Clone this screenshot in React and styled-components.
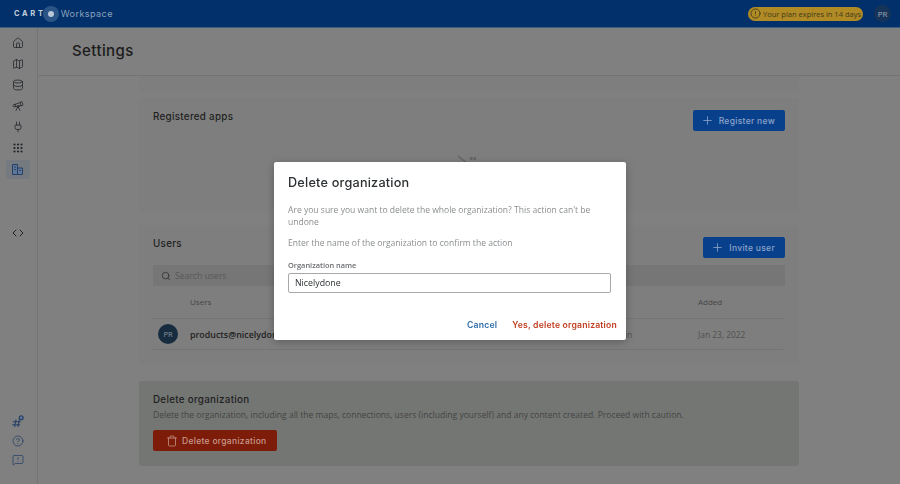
import styled, { createGlobalStyle } from 'styled-components'
import {
  Home, Map, Database, Telescope, Plug, Grip, Code, CircleHelp,
  MessageSquareWarning, Plus, Search, Trash, CircleAlert,
} from 'lucide-react'

const GlobalStyle = createGlobalStyle`
  html, body { margin: 0; padding: 0; height: 100%; overflow: hidden; background: #808080; }
  * { box-sizing: border-box; }
  body { font-family: "Open Sans", "Liberation Sans", sans-serif; }
`

const heading = `"Inter", "DejaVu Sans", sans-serif`

const Page = styled.div`
  width: 900px;
  height: 484px;
  display: flex;
  flex-direction: column;
  overflow: hidden;
`
const TopBar = styled.header`
  height: 28px;
  flex: none;
  background: #01306b;
  display: flex;
  align-items: center;
  padding: 0 9px 0 14px;
  border-bottom: 1px solid #3d5f86;
`
const Logo = styled.div`
  display: flex;
  align-items: center;
  font-family: ${heading};
  font-size: 7.5px;
  font-weight: 700;
  letter-spacing: 2.7px;
  color: #c4cfdc;
`
const LogoDot = styled.span`
  width: 16px;
  height: 16px;
  margin-left: -3px;
  border-radius: 50%;
  background: #2b5587;
  display: flex;
  align-items: center;
  justify-content: center;
  &::after {
    content: '';
    width: 6px;
    height: 6px;
    border-radius: 50%;
    background: #b8c8d8;
  }
`
const Product = styled.span`
  margin-left: 2px;
  font-family: ${heading};
  font-size: 9.1px;
  letter-spacing: 0.4px;
  color: #8ba1bb;
`
const PlanPill = styled.div`
  margin-left: auto;
  height: 14px;
  width: 115px;
  border-radius: 7px;
  background: #b08a25;
  color: #3f3a1c;
  font-size: 7.5px;
  display: flex;
  align-items: center;
  gap: 2px;
  padding-left: 2px;
  white-space: nowrap;
`
const TopAvatar = styled.div`
  width: 17px;
  height: 17px;
  margin-left: 11px;
  border-radius: 50%;
  background: #16345a;
  color: #a0aab8;
  font-size: 8px;
  display: flex;
  align-items: center;
  justify-content: center;
`
const Body = styled.div`
  flex: 1;
  display: flex;
  min-height: 0;
`
const Sidebar = styled.nav`
  width: 38px;
  flex: none;
  border-right: 1px solid #747474;
  display: flex;
  flex-direction: column;
  align-items: center;
  padding: 5px 2px 15px 0;
`
const NavItem = styled.div`
  width: 24px;
  height: 19px;
  margin-bottom: ${p => (p.$tight ? '0' : '2.2px')};
  display: flex;
  align-items: center;
  justify-content: center;
  border-radius: 2px;
  color: ${p => (p.$tone === 'blue' ? '#263f66' : '#1f2226')};
  background: ${p => (p.$active ? '#757a80' : 'transparent')};
`
const NavDivider = styled.div`
  height: 42px;
`
const NavFooter = styled.div`
  margin-top: auto;
`
const Main = styled.main`
  flex: 1;
  min-width: 0;
`
const PageHead = styled.div`
  height: 48px;
  padding: 13px 0 0 34px;
  border-bottom: 1px solid #747474;
`
const PageTitle = styled.h1`
  margin: 0;
  font-family: ${heading};
  font-size: 15px;
  line-height: 20px;
  font-weight: 500;
  letter-spacing: 0.4px;
  color: #1c1c1c;
`
const Content = styled.div`
  width: 660px;
  margin-left: 101px;
  display: flex;
  flex-direction: column;
`
const Card = styled.section`
  height: ${p => p.$h}px;
  margin-bottom: ${p => p.$gap}px;
  padding: ${p => p.$pad || '0'};
  background: #7e7e7e;
  border-radius: 2px;
`
const DangerCard = styled.section`
  height: 85px;
  padding: 11px 14px;
  background: #747674;
  border-radius: 3px;
`
const CardTitle = styled.h2`
  margin: 0;
  font-family: ${heading};
  font-size: 9.8px;
  line-height: 16px;
  font-weight: 500;
  letter-spacing: 0.3px;
  color: #1f1f1f;
`
const CardHead = styled.div`
  display: flex;
  align-items: flex-start;
  justify-content: space-between;
  ${CardTitle} {
    margin-top: -1px;
  }
`
const Button = styled.button`
  height: 21px;
  border: 0;
  border-radius: 2px;
  padding: 0 10px 0 ${p => (p.$danger ? '13px' : '8px')};
  display: flex;
  align-items: center;
  gap: ${p => (p.$danger ? '4px' : '5px')};
  font-family: ${heading};
  font-size: 8.5px;
  font-weight: 500;
  letter-spacing: 0.3px;
  background: ${p => (p.$danger ? '#7d1c08' : '#09408c')};
  color: ${p => (p.$danger ? '#c79a8e' : '#8ca4c8')};
`
const EmptyMark = styled.div`
  display: flex;
  justify-content: center;
  padding: 24px 4px 0 0;
`
const SearchBar = styled.div`
  height: 21px;
  margin-top: 7px;
  background: #767676;
  display: flex;
  align-items: center;
  gap: 4px;
  padding-left: 8px;
  font-size: 8.6px;
  color: #585858;
`
const TableRow = styled.div`
  display: grid;
  grid-template-columns: 37px 1fr 91px 85px;
  align-items: center;
  height: ${p => p.$h}px;
  margin-right: 2px;
  padding-bottom: ${p => (p.$head ? '2px' : '0')};
  border-bottom: 1px solid #747474;
  font-size: ${p => (p.$head ? '8px' : '8.4px')};
  color: ${p => (p.$head ? '#454545' : '#505050')};
`
const RowAvatar = styled.div`
  width: 20px;
  height: 20px;
  margin-left: 5px;
  border-radius: 50%;
  background: #182c40;
  color: #87919c;
  font-size: 7.5px;
  display: flex;
  align-items: center;
  justify-content: center;
`
const Email = styled.span`
  font-size: 8.9px;
  font-weight: 600;
  color: #1f1f1f;
`
const DangerText = styled.p`
  margin: 0 0 8px;
  font-size: 8.55px;
  line-height: 14px;
  color: #444;
  white-space: nowrap;
`
const Backdrop = styled.div`
  position: fixed;
  inset: 0;
  display: flex;
  align-items: center;
  justify-content: center;
  padding-top: 18px;
`
const Dialog = styled.div`
  width: 352px;
  height: 178px;
  background: #fff;
  border-radius: 2px;
  padding: 12px 14px 0;
  display: flex;
  flex-direction: column;
  box-shadow: 0 2px 8px rgba(0, 0, 0, 0.25);
`
const DialogTitle = styled.h2`
  margin: 0 0 12px;
  font-family: ${heading};
  font-size: 12.7px;
  line-height: 18px;
  font-weight: 500;
  letter-spacing: 0.2px;
  color: #2c3032;
`
const DialogText = styled.p`
  margin: 0 0 9px;
  font-size: 8.55px;
  line-height: 12px;
  color: #8a8d8f;
`
const FieldLabel = styled.label`
  margin-top: 1px;
  font-size: 7.4px;
  line-height: 12px;
  font-weight: 600;
  color: #6a6d70;
`
const FieldInput = styled.input`
  width: 323px;
  height: 20px;
  margin-top: 2px;
  padding: 0 6px;
  border: 1px solid #a6a8aa;
  border-radius: 2px;
  outline: 0;
  font-family: inherit;
  font-size: 8.8px;
  color: #2c3032;
`
const DialogActions = styled.div`
  margin: auto -5px 8px 0;
  display: flex;
  justify-content: flex-end;
  gap: 15px;
`
const TextButton = styled.button`
  border: 0;
  padding: 0;
  background: none;
  font-family: ${heading};
  font-size: 8.65px;
  line-height: 14px;
  font-weight: 600;
  letter-spacing: 0.2px;
  color: ${p => (p.$danger ? '#bf3d1e' : '#2f6ca8')};
`

const OrgIcon = () => (
  <svg width="13" height="13" viewBox="0 0 13 13" fill="none" stroke="currentColor">
    <path d="M1.5 1.5h5v10h-5zM6.5 5h5v6.5h-5z" fill="#5f7696" />
    <path d="M3 4h2M3 6.5h2M8 7.5h2" stroke="#2a4468" />
  </svg>
)

const ChannelIcon = () => (
  <svg width="13" height="13" viewBox="0 0 13 13" fill="none" stroke="currentColor" strokeWidth="1.1">
    <path d="M5 4.5 3.6 12M8.4 4.5 7 12M1.8 6.7h7.8M1.2 9.8h7.8" />
    <circle cx="10.2" cy="2.8" r="2" fill="#5f7696" />
  </svg>
)

const navTop = [Home, Map, Database, Telescope, Plug]
const navBottom = [ChannelIcon, () => <CircleHelp size={12} strokeWidth={1.5} />, () => <MessageSquareWarning size={12} strokeWidth={1.5} />]

const App = () => {
  return (
    <Page>
      <GlobalStyle />
      <TopBar>
        <Logo>CART<LogoDot /></Logo>
        <Product>Workspace</Product>
        <PlanPill>
          <CircleAlert size={11} color="#33301a" strokeWidth={1.6} />
          Your plan expires in 14 days
        </PlanPill>
        <TopAvatar>PR</TopAvatar>
      </TopBar>
      <Body>
        <Sidebar>
          {navTop.map((Icon, i) => (
            <NavItem key={i}><Icon size={12} strokeWidth={1.5} /></NavItem>
          ))}
          <NavItem><Grip size={12} strokeWidth={2.4} /></NavItem>
          <NavItem $active $tone="blue"><OrgIcon /></NavItem>
          <NavDivider />
          <NavItem><Code size={12} strokeWidth={2} /></NavItem>
          <NavFooter>
            {navBottom.map((Icon, i) => (
              <NavItem key={i} $tight $tone="blue"><Icon /></NavItem>
            ))}
          </NavFooter>
        </Sidebar>
        <Main>
          <PageHead>
            <PageTitle>Settings</PageTitle>
          </PageHead>
          <Content>
            <Card $h={15} $gap={7} />
            <Card $h={114} $gap={13} $pad="12px 14px">
              <CardHead>
                <CardTitle>Registered apps</CardTitle>
                <Button>
                  <Plus size={13} strokeWidth={1.5} />
                  Register new
                </Button>
              </CardHead>
              <EmptyMark>
                <svg width="20" height="12" viewBox="0 0 20 12" fill="none">
                  <path d="M1 1l10 8" stroke="#666" strokeWidth="1.6" />
                  <path d="M13 2h2.500v3H13zM16.500 2H19v3h-2.500z" fill="#666" />
                </svg>
              </EmptyMark>
            </Card>
            <Card $h={140} $gap={16} $pad="12px 14px">
              <CardHead>
                <CardTitle>Users</CardTitle>
                <Button>
                  <Plus size={13} strokeWidth={1.5} />
                  Invite user
                </Button>
              </CardHead>
              <SearchBar>
                <Search size={10} color="#333" />
                Search users
              </SearchBar>
              <TableRow $h={33} $head>
                <span />
                <span>Users</span>
                <span>Role</span>
                <span>Added</span>
              </TableRow>
              <TableRow $h={31}>
                <RowAvatar>PR</RowAvatar>
                <Email>products@nicelydone.club</Email>
                <span>Admin</span>
                <span>Jan 23, 2022</span>
              </TableRow>
            </Card>
            <DangerCard>
              <CardTitle>Delete organization</CardTitle>
              <DangerText>
                Delete the organization, including all the maps, connections, users (including yourself) and any content created. Proceed with caution.
              </DangerText>
              <Button $danger>
                <Trash size={12} strokeWidth={1.5} />
                Delete organization
              </Button>
            </DangerCard>
          </Content>
        </Main>
      </Body>
      <Backdrop>
        <Dialog>
          <DialogTitle>Delete organization</DialogTitle>
          <DialogText>
            Are you sure you want to delete the whole organization? This action can't be undone
          </DialogText>
          <DialogText>Enter the name of the organization to confirm the action</DialogText>
          <FieldLabel>Organization name</FieldLabel>
          <FieldInput defaultValue="Nicelydone" />
          <DialogActions>
            <TextButton>Cancel</TextButton>
            <TextButton $danger>Yes, delete organization</TextButton>
          </DialogActions>
        </Dialog>
      </Backdrop>
    </Page>
  )
}

export default App
